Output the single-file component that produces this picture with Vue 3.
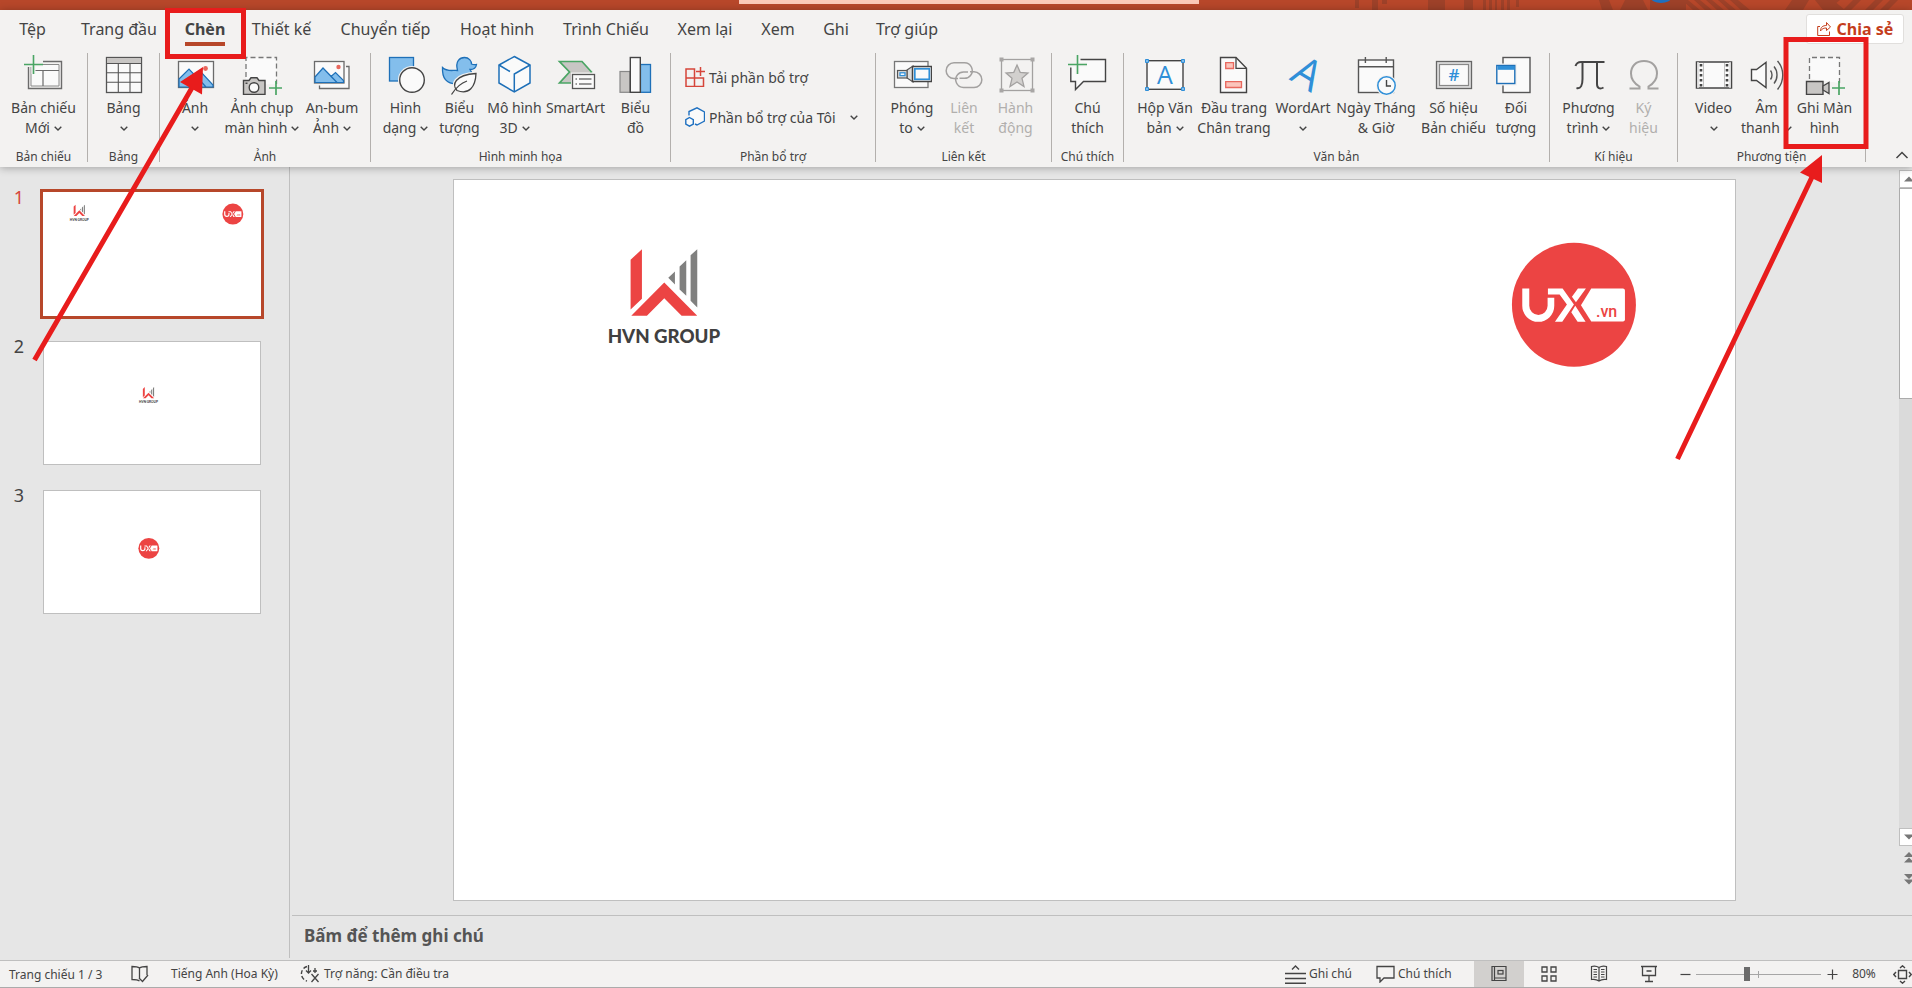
<script setup>
import { ref } from 'vue'

const tabs = [
  { label: 'Tệp', w: 65 },
  { label: 'Trang đầu', w: 108 },
  { label: 'Chèn', w: 64 },
  { label: 'Thiết kế', w: 89 },
  { label: 'Chuyển tiếp', w: 119 },
  { label: 'Hoạt hình', w: 104 },
  { label: 'Trình Chiếu', w: 114 },
  { label: 'Xem lại', w: 84 },
  { label: 'Xem', w: 62 },
  { label: 'Ghi', w: 54 },
  { label: 'Trợ giúp', w: 88 },
]
const activeTab = ref('Chèn')

const groups = [
  { name: 'Bản chiếu', w: 88, items: [{ icon: 'new', a: 'Bản chiếu', b: 'Mới', menu: true, w: 72 }] },
  { name: 'Bảng', w: 72, items: [{ icon: 'table', a: 'Bảng', b: '', menu: true, w: 52 }] },
  {
    name: 'Ảnh', w: 211, items: [
      { icon: 'picture', a: 'Ảnh', b: '', menu: true, w: 66 },
      { icon: 'shot', a: 'Ảnh chụp', b: 'màn hình', menu: true, w: 68 },
      { icon: 'album', a: 'An-bum', b: 'Ảnh', menu: true, w: 72 },
    ],
  },
  {
    name: 'Hình minh họa', w: 300, items: [
      { icon: 'shapes', a: 'Hình', b: 'dạng', menu: true, w: 54 },
      { icon: 'duck', a: 'Biểu', b: 'tượng', w: 54 },
      { icon: 'cube', a: 'Mô hình', b: '3D', menu: true, w: 56 },
      { icon: 'smart', a: 'SmartArt', b: '', w: 66 },
      { icon: 'chart', a: 'Biểu', b: 'đồ', w: 54 },
    ],
  },
  { name: 'Phần bổ trợ', w: 205, addins: true, items: [] },
  {
    name: 'Liên kết', w: 176, items: [
      { icon: 'zoom', a: 'Phóng', b: 'to', menu: true, w: 52 },
      { icon: 'link', a: 'Liên', b: 'kết', off: true, w: 52 },
      { icon: 'action', a: 'Hành', b: 'động', off: true, w: 51 },
    ],
  },
  { name: 'Chú thích', w: 72, items: [{ icon: 'comment', a: 'Chú', b: 'thích', w: 60 }] },
  {
    name: 'Văn bản', w: 426, items: [
      { icon: 'textbox', a: 'Hộp Văn', b: 'bản', menu: true, w: 66 },
      { icon: 'header', a: 'Đầu trang', b: 'Chân trang', w: 72 },
      { icon: 'wordart', a: 'WordArt', b: '', menu: true, w: 66 },
      { icon: 'date', a: 'Ngày Tháng', b: '& Giờ', w: 80 },
      { icon: 'number', a: 'Số hiệu', b: 'Bản chiếu', w: 75 },
      { icon: 'object', a: 'Đối', b: 'tượng', w: 50 },
    ],
  },
  {
    name: 'Kí hiệu', w: 128, items: [
      { icon: 'pi', a: 'Phương', b: 'trình', menu: true, w: 60 },
      { icon: 'omega', a: 'Ký', b: 'hiệu', off: true, w: 50 },
    ],
  },
  {
    name: 'Phương tiện', w: 188, items: [
      { icon: 'video', a: 'Video', b: '', menu: true, w: 58 },
      { icon: 'audio', a: 'Âm', b: 'thanh', menu: true, w: 48 },
      { icon: 'record', a: 'Ghi Màn', b: 'hình', w: 68 },
    ],
  },
]

const slides = [
  { id: 1, marks: [{ ref: '#logo-hvn', x: 0, y: 0 }, { ref: '#logo-ux', x: 0, y: 0 }] },
  { id: 2, marks: [{ ref: '#logo-hvn', x: 410, y: 198 }] },
  { id: 3, marks: [{ ref: '#logo-ux', x: -498, y: 215 }] },
]
const current = ref(0)
const zoom = ref(40)
const views = [
  { icon: 'v-normal', label: 'Bình thường' },
  { icon: 'v-sorter', label: 'Bộ sắp xếp trang chiếu' },
  { icon: 'v-read', label: 'Dạng xem đọc' },
  { icon: 'v-show', label: 'Trình chiếu' },
]
const view = ref(0)
</script>

<template>
  <svg class="defs" aria-hidden="true">
    <defs>
      <symbol id="i-new" viewBox="0 0 40 40">
        <path d="M19 6.5H37.5V33.5H4.5V12" fill="none" stroke="#6b6b6b" stroke-width="1.4" />
        <path d="M19 9.5H35V31H7V12" fill="#fafafa" stroke="#8a8a8a" stroke-width="1" />
        <path d="M11 15.5H35M19 15.5V31" fill="none" stroke="#6b6b6b" stroke-width="1.2" />
        <path d="M0 9.5H19M9.5 0V19" stroke="#f3f2f1" stroke-width="4" />
        <path d="M0 9.5H19M9.5 0V19" stroke="#4aa564" stroke-width="1.6" />
      </symbol>
      <symbol id="i-table" viewBox="0 0 40 40">
        <rect x="2.5" y="2.5" width="35" height="35" fill="#fafafa" stroke="#555" stroke-width="1.3" />
        <rect x="3" y="3" width="34" height="5.5" fill="#c8c6c4" />
        <path d="M3 8.5H37M3 17.7H37M3 27.3H37M14.3 8.5V37M26 8.5V37" stroke="#555" stroke-width="1.1" />
      </symbol>
      <symbol id="i-picture" viewBox="0 0 40 40">
        <rect x="3.5" y="6.5" width="35" height="26" fill="#fafafa" stroke="#6b6b6b" stroke-width="1.3" />
        <circle cx="30.5" cy="13.5" r="2.4" fill="#e8685e" />
        <path d="M4 24L14 14L31 32H4ZM38 31V30L27 18L22.5 22.5L31 32H38Z" fill="#83beec" stroke="#1e70b8" stroke-width="1.2" />
      </symbol>
      <symbol id="i-shot" viewBox="0 0 40 40">
        <path d="M4 30V2.5H34.5V29" fill="#fafafa" stroke="#777" stroke-width="1.3" stroke-dasharray="5 3" />
        <path d="M1.5 25.5H7L9 22.8H15L17 25.5H23V39.5H1.5Z" fill="#c8c6c4" stroke="#444" stroke-width="1.4" />
        <circle cx="12" cy="32.5" r="4.8" fill="#fafafa" stroke="#444" stroke-width="1.4" />
        <rect x="3.5" y="27.5" width="2" height="1.5" fill="#444" />
        <path d="M27 33H41M34 26V40" stroke="#4aa564" stroke-width="1.7" />
      </symbol>
      <symbol id="i-album" viewBox="0 0 40 40">
        <path d="M34 11.5H37V33.5H7.5V30.5" fill="#fafafa" stroke="#6b6b6b" stroke-width="1.3" />
        <rect x="2.5" y="6.5" width="29.5" height="21.5" fill="#fafafa" stroke="#6b6b6b" stroke-width="1.3" />
        <circle cx="26.5" cy="12" r="2.2" fill="#e8685e" />
        <path d="M3 22L11 13L25 27.5H3ZM31.5 27V25.5L23.5 17.5L19 21.5L25 27.5H31.5Z" fill="#83beec" stroke="#1e70b8" stroke-width="1.2" />
      </symbol>
      <symbol id="i-shapes" viewBox="0 0 40 40">
        <rect x="3.5" y="2.5" width="24" height="23.5" fill="#83beec" stroke="#1e70b8" stroke-width="1.3" />
        <circle cx="26" cy="25" r="14" fill="#f3f2f1" />
        <circle cx="26" cy="25" r="12.3" fill="#fafafa" stroke="#444" stroke-width="1.4" />
      </symbol>
      <symbol id="i-duck" viewBox="0 0 40 40">
        <path d="M2.5 12.5C7 17 12 15 17.5 15.5C15 6 20 2.5 24.5 2.5C29 2.5 31.5 6 31.5 9C33.5 10 35.5 9.5 36.5 9.5C36 13 33.5 14.5 30 14.5L32 18C30 27 23 29 17 29C6 29 2 23 2.5 12.5Z" fill="#83beec" stroke="#1e70b8" stroke-width="1.3" />
        <path d="M17 35.5C12 30 14 20 36 18.5C35.5 32 29 40 17 35.5ZM11.5 39.5L17 34" fill="#fafafa" stroke="#f3f2f1" stroke-width="4" />
        <path d="M17 35.5C12 30 14 20 36 18.5C35.5 32 29 40 17 35.5Z" fill="#fafafa" stroke="#444" stroke-width="1.3" />
        <path d="M11.5 39.5C15 34 21 28 27 26" fill="none" stroke="#444" stroke-width="1.3" />
      </symbol>
      <symbol id="i-cube" viewBox="0 0 40 40">
        <path d="M19.3 1.5L35 10V28L19.3 37L4 28V10Z" fill="#fafafa" stroke="#1e70b8" stroke-width="1.5" />
        <path d="M4 10L15 16.5M35 10L19.3 19V37" fill="none" stroke="#1e70b8" stroke-width="1.5" />
      </symbol>
      <symbol id="i-smart" viewBox="0 0 40 40">
        <path d="M3.5 6.5H26L35.5 17L27 28H3.5L13.5 17Z" fill="#c8c6c4" stroke="#4aa564" stroke-width="1.7" />
        <rect x="15" y="17.5" width="25" height="18" fill="#f3f2f1" />
        <rect x="16.5" y="19.5" width="22" height="14" fill="#fafafa" stroke="#555" stroke-width="1.3" />
        <path d="M19.5 24H21M23 24H35.5M19.5 29H21M23 29H35.5" stroke="#777" stroke-width="1.3" />
      </symbol>
      <symbol id="i-chart" viewBox="0 0 40 40">
        <rect x="4" y="16.5" width="10" height="20.8" fill="#c8c6c4" stroke="#888" stroke-width="1.2" />
        <rect x="24.5" y="9.5" width="10" height="27.8" fill="#83beec" stroke="#1e70b8" stroke-width="1.3" />
        <rect x="14.3" y="2.5" width="10" height="34.8" fill="#fafafa" stroke="#444" stroke-width="1.4" />
      </symbol>
      <symbol id="i-zoom" viewBox="0 0 40 40">
        <rect x="2.5" y="6.5" width="33.5" height="26" fill="#fafafa" stroke="#777" stroke-width="1.3" />
        <path d="M15 15L21 11V27L15 23Z" fill="#ddd" stroke="#555" stroke-width="1.2" />
        <rect x="5.5" y="15.5" width="9.5" height="7.5" fill="#ddd" stroke="#555" stroke-width="1.2" />
        <rect x="8" y="17.8" width="5" height="2.8" fill="#fff" stroke="#2f8fd8" stroke-width="1.3" />
        <rect x="20.5" y="11.5" width="19" height="15" fill="#fafafa" stroke="#444" stroke-width="1.5" />
        <rect x="22.8" y="13.8" width="14.5" height="10.5" fill="#fafafa" stroke="#2f8fd8" stroke-width="1.7" />
      </symbol>
      <symbol id="i-link" viewBox="0 0 40 40">
        <g fill="none" stroke="#a3a1a0" stroke-width="1.5">
          <path d="M14 23.5H10A7.8 7.8 0 0 1 10 7.8H20.5A7.8 7.8 0 0 1 26.5 20.5C25 22.5 23 23.3 20.5 23.3H15.5" />
          <path d="M26 16.8H30A7.8 7.8 0 0 1 30 32.5H19.5A7.8 7.8 0 0 1 13.5 19.8C15 17.8 17 17 19.5 17H24" />
        </g>
      </symbol>
      <symbol id="i-action" viewBox="0 0 40 40">
        <rect x="5.5" y="4.5" width="31" height="31" fill="none" stroke="#a3a1a0" stroke-width="1.3" />
        <path d="M21 10L24.2 17.3L32 18L26 23.3L28 31.5L21 27L14 31.5L16 23.3L10 18L17.8 17.3Z" fill="#d2d0ce" stroke="#a3a1a0" stroke-width="1.3" />
        <path d="M3.5 2.5h4v4h-4zM34.5 2.5h4v4h-4zM3.5 33.5h4v4h-4zM34.5 33.5h4v4h-4z" fill="#a8a6a5" />
      </symbol>
      <symbol id="i-comment" viewBox="0 0 40 40">
        <path d="M9.5 4.5H37.5V26.5H15.5L7.5 34.5V26.5H2.8V9.5H9.5Z" fill="#fafafa" />
        <path d="M12.5 4.5H37.5V26.5H15.5L7.5 34.5V26.5H2.8V12.5" fill="none" stroke="#444" stroke-width="1.4" />
        <path d="M0 9.5H19M9.5 0V19" stroke="#f3f2f1" stroke-width="4" />
        <path d="M0 9.5H19M9.5 0V19" stroke="#4aa564" stroke-width="1.6" />
      </symbol>
      <symbol id="i-textbox" viewBox="0 0 40 40">
        <rect x="2" y="5.7" width="36" height="28.6" fill="#fafafa" stroke="#444" stroke-width="1.4" />
        <path d="M.5 4.5h3v3h-3zM36.5 4.5h3v3h-3zM.5 32.5h3v3h-3zM36.5 32.5h3v3h-3z" fill="#83beec" stroke="#2f8fd8" stroke-width="1" />
        <text x="20" y="29" font-family="Open Sans, sans-serif" font-size="25" fill="#2f8fd8" text-anchor="middle">A</text>
      </symbol>
      <symbol id="i-header" viewBox="0 0 40 40">
        <path d="M6.5 2.5H22L32.5 13.3V37.5H6.5Z" fill="#fafafa" stroke="#444" stroke-width="1.4" />
        <path d="M22 2.5V13.3H32.5" fill="none" stroke="#444" stroke-width="1.3" />
        <path d="M11.7 7.7H19.5V13.5H11.7ZM11.7 26.7H27.5V32.5H11.7Z" fill="#fbc4bb" stroke="#e8685e" stroke-width="1.3" />
      </symbol>
      <symbol id="i-wordart" viewBox="0 0 40 40">
        <text transform="translate(17 31) rotate(31)" font-family="Open Sans, sans-serif" font-size="42" fill="#2f8fd8" text-anchor="middle">A</text>
      </symbol>
      <symbol id="i-date" viewBox="0 0 40 40">
        <rect x="2.5" y="5" width="35" height="32.5" fill="#fafafa" stroke="#555" stroke-width="1.4" />
        <path d="M2.5 11.7H37.5M9.4 2V8M30.2 2V8" stroke="#555" stroke-width="1.4" />
        <circle cx="30.5" cy="30.5" r="10.5" fill="#f3f2f1" />
        <circle cx="30.5" cy="30.5" r="8.7" fill="#fafafa" stroke="#2f8fd8" stroke-width="1.5" />
        <path d="M30.5 25V31H35" fill="none" stroke="#444" stroke-width="1.4" />
      </symbol>
      <symbol id="i-number" viewBox="0 0 40 40">
        <rect x="2.5" y="6.5" width="35" height="27" fill="#ddd" stroke="#666" stroke-width="1.3" />
        <rect x="5.5" y="9.5" width="29" height="21" fill="#fafafa" stroke="#888" stroke-width="1.2" />
        <text x="20" y="26" font-family="Open Sans, sans-serif" font-size="17" font-weight="600" fill="#2f8fd8" text-anchor="middle">#</text>
      </symbol>
      <symbol id="i-object" viewBox="0 0 40 40">
        <rect x="7" y="2.5" width="27" height="35" fill="#fafafa" stroke="#555" stroke-width="1.4" />
        <rect x="-1" y="8.5" width="22" height="22" fill="#f3f2f1" />
        <rect x=".8" y="10.5" width="18" height="18" fill="#fafafa" stroke="#1e70b8" stroke-width="1.4" />
        <rect x="1.5" y="11" width="17" height="3.8" fill="#2f8fd8" />
      </symbol>
      <symbol id="i-pi" viewBox="0 0 40 40">
        <path d="M6.5 11C7.5 8 9 7 12 7H35.5M13.5 7V24C13.5 30 12 34 7.5 33M28 7V29C28 33.5 31 34.5 34.5 32.5" fill="none" stroke="#444" stroke-width="2" />
      </symbol>
      <symbol id="i-omega" viewBox="0 0 40 40">
        <path d="M5.500 33.5H15.5V31.5C9.5 28 7 24 7 18.5C7 11 12 6 20 6C28 6 33 11 33 18.5C33 24 30.5 28 24.5 31.5V33.5H34.5" fill="none" stroke="#a3a1a0" stroke-width="2" />
      </symbol>
      <symbol id="i-video" viewBox="0 0 40 40">
        <rect x="2.5" y="7" width="35" height="26" fill="#fafafa" stroke="#444" stroke-width="1.5" />
        <path d="M4 7V33M36 7V33" stroke="#ddd" stroke-width="1.5" />
        <path d="M7 9V32M33 9V32" stroke="#444" stroke-width="2.6" stroke-dasharray="2.5 2.5" />
        <path d="M9.5 8V32M30.5 8V32" stroke="#999" stroke-width=".6" />
      </symbol>
      <symbol id="i-audio" viewBox="0 0 40 40">
        <path d="M4.5 14.5H9.5L19 7.5V32.5L9.5 25.5H4.5Z" fill="#fafafa" stroke="#444" stroke-width="1.4" />
        <path d="M23.5 15.5C25.5 18 25.5 22 23.5 24.5M27 11.5C31 16 31 24 27 28.5M30.5 6C37.5 14 37.5 26 30.5 34.5" fill="none" stroke="#555" stroke-width="1.4" />
      </symbol>
      <symbol id="i-record" viewBox="0 0 40 40">
        <path d="M4.5 24V2.5H34.5V28" fill="#fafafa" stroke="#777" stroke-width="1.3" stroke-dasharray="5 3" />
        <path d="M1.5 26.5H18V39.5H1.5Z" fill="#c8c6c4" stroke="#444" stroke-width="1.4" />
        <path d="M18 31L24 27.5V38.5L18 35Z" fill="#c8c6c4" stroke="#444" stroke-width="1.3" />
        <path d="M27 33H41M34 26V40" stroke="#4aa564" stroke-width="1.7" />
      </symbol>

      <symbol id="v-normal" viewBox="0 0 20 20">
        <path d="M3 2.5H17V16.5H3ZM5.5 2.5V16.5M5.5 14H17" fill="none" stroke="#444" stroke-width="1.2" />
        <rect x="9" y="6.5" width="5" height="3.5" fill="none" stroke="#444" stroke-width="1.2" />
      </symbol>
      <symbol id="v-sorter" viewBox="0 0 20 20">
        <path d="M3 3H8V8H3ZM12 3H17V8H12ZM3 12H8V17H3ZM12 12H17V17H12Z" fill="none" stroke="#444" stroke-width="1.3" />
      </symbol>
      <symbol id="v-read" viewBox="0 0 20 20">
        <path d="M10 3.5C7.5 1.8 5 1.8 2.5 2.5V15.5C5 15 7.5 15.2 10 17C12.5 15.2 15 15 17.5 15.5V2.5C15 1.8 12.5 1.8 10 3.5ZM10 3.5V17" fill="none" stroke="#444" stroke-width="1.2" />
        <path d="M4.5 5.5H8M4.5 8H8M4.5 10.5H8M4.5 13H8M12 5.5H15.5M12 8H15.5M12 10.5H15.5M12 13H15.5" stroke="#444" stroke-width="1.1" />
      </symbol>
      <symbol id="v-show" viewBox="0 0 20 20">
        <path d="M2 2.5H18M3.5 2.5V11.5H16.5V2.5M10 11.5V17M6 17.5H14M7.5 7H12.5" fill="none" stroke="#444" stroke-width="1.3" />
      </symbol>

      <g id="logo-hvn">
        <g transform="translate(105.5 40.5) scale(.3333)">
          <path d="M211 118L245 86V235L211 267ZM213 286L312 186L411 286H364L312 233L260 286Z" fill="#ec4443" />
          <path d="M324 172L344 153V192ZM358 138L378 119V226L358 207ZM391 104L411 86V261L391 241Z" fill="#80807f" />
          <text x="311" y="369" font-family="Lato, sans-serif" font-size="56" font-weight="900" fill="#404040" text-anchor="middle">HVN GROUP</text>
        </g>
      </g>
      <g id="logo-ux">
        <g transform="translate(1025.5 40.5) scale(.3333)">
          <circle cx="281" cy="253" r="186" fill="#ec4443" />
          <g fill="#fff">
            <path d="M126 204H147V256A27.500 27.500 0 0 0 202 256V232H222V256A48 48 0 0 1 126 256Z" />
            <path d="M203 204H247L281 252L246 304H224L260 252L238 222H203Z" />
            <path d="M293 204H317L287 245L275 229ZM285 256L316 304H292L273 275Z" />
            <path d="M333 204H428Q434 204 434 210V297Q434 303 428 303H333L302 254Z" />
          </g>
          <text x="379" y="290" font-family="Roboto, sans-serif" font-size="48" font-weight="500" fill="#ec4443" text-anchor="middle">.vn</text>
        </g>
      </g>
    </defs>
  </svg>

  <div class="app">
    <div class="titlebar">
      <div class="search"></div>
      <svg class="pattern" width="572" height="10" viewBox="0 0 572 10" aria-hidden="true">
        <path d="M15 0h4v8h-4zM32 0h6v10h-6zM42 0h5v4h-5zM88 0h17v10H88zM124 0h9v10h-9zM143 0h3v10h-3zM149 0h3v10h-3zM155 0h2v10h-2zM161 0h3v10h-3zM167 0h3v10h-3zM176 0h3v7h-3zM259 0h10l4 10h-11zM285 0h18l5 10h-28zM310 0h36v10h-36zM342 0h6l12 10h-7zM354 0h6l12 10h-7zM366 0h6l12 10h-7zM378 0h6l12 10h-7zM390 0h8l12 10h-9zM452 0h17l-6 10h-18zM475 0h18l12 10h-22zM492 0h8l-10 8-6-2zM513 0h8l-10 10h-8zM535 0h8l-10 10h-8zM550 0h8l-10 10h-8z" fill="#9d4129" />
        <ellipse cx="321" cy="-2" rx="10" ry="5" fill="#1e70c0" />
      </svg>
    </div>

    <header class="ribbon">
      <div class="tabrow">
        <nav class="tabs">
          <button
            v-for="t in tabs" :key="t.label" class="tab" :class="{ on: t.label === activeTab }"
            :style="{ width: t.w + 'px' }" @click="activeTab = t.label"
          ><span>{{ t.label }}</span></button>
        </nav>
        <button class="share">
          <svg width="14" height="16" viewBox="0 0 14 16" aria-hidden="true">
            <path d="M3 5.5H.7V14.5H12.5V10.5M3.5 10C3.5 6 6 4.5 9.500 4.500V1.5L13.5 6L9.5 9.5V7C7 7 5 7.5 3.5 10Z" fill="none" stroke="#c43e1c" stroke-width="1" />
          </svg>
          Chia sẻ
        </button>
      </div>

      <div class="groups">
        <section v-for="g in groups" :key="g.name" class="group" :style="{ width: g.w + 'px' }">
          <div v-if="g.addins" class="addins">
            <button class="addin">
              <svg width="20" height="20" viewBox="0 0 20 20" aria-hidden="true">
                <path d="M1 2H9.5V19.5H1ZM1 11H18.5V19.5H9.5V11M15.5 0V9M11 4.500H20" fill="none" stroke="#d6453a" stroke-width="1.5" />
              </svg>
              <span>Tải phần bổ trợ</span>
            </button>
            <button class="addin">
              <svg width="20" height="20" viewBox="0 0 20 20" aria-hidden="true">
                <path d="M4 8.5V4.5L12 .8L19.5 5V14L12 18L10 17" fill="#fafafa" stroke="#1e70c0" stroke-width="1.4" />
                <path d="M4.5 10.5L8.3 12.7V17L4.5 19.2L.8 17V12.7Z" fill="#fafafa" stroke="#1e70c0" stroke-width="1.4" />
              </svg>
              <span>Phần bổ trợ của Tôi</span>
              <svg class="caret wide" width="8" height="5" viewBox="0 0 8 5" aria-hidden="true"><path d="M.7 .7L4 4L7.3 .7" /></svg>
            </button>
          </div>
          <div v-else class="items">
            <button
              v-for="b in g.items" :key="b.icon" class="cmd" :disabled="b.off"
              :style="{ width: b.w + 'px' }"
            >
              <svg class="ico" width="40" height="40" aria-hidden="true"><use :href="'#i-' + b.icon" /></svg>
              <span class="line">{{ b.a }}</span>
              <span class="line">
                {{ b.b }}
                <svg v-if="b.menu" class="caret" width="8" height="5" viewBox="0 0 8 5" aria-hidden="true"><path d="M.7 .7L4 4L7.3 .7" /></svg>
              </span>
            </button>
          </div>
          <div class="gname">{{ g.name }}</div>
        </section>
        <button class="collapse" aria-label="Thu gọn dải băng">
          <svg width="14" height="8" viewBox="0 0 14 8" aria-hidden="true"><path d="M1.5 7L7 1.5L12.5 7" fill="none" stroke="#444" stroke-width="1.5" /></svg>
        </button>
      </div>
    </header>

    <main class="work">
      <aside class="thumbs">
        <button
          v-for="(s, i) in slides" :key="s.id" class="thumb" :class="{ on: i === current }"
          @click="current = i"
        >
          <span class="num">{{ s.id }}</span>
          <svg class="mini" viewBox="0 0 1280 720" aria-hidden="true">
            <use v-for="m in s.marks" :key="m.ref" :href="m.ref" :x="m.x" :y="m.y" />
          </svg>
        </button>
      </aside>
      <div class="editor">
        <div class="stage">
          <div class="canvas">
            <svg class="slide" viewBox="0 0 1280 720" role="img" aria-label="Trang chiếu">
              <use v-for="m in slides[current].marks" :key="m.ref" :href="m.ref" :x="m.x" :y="m.y" />
            </svg>
          </div>
          <div class="scroll">
            <button class="sbtn" aria-label="Lên"><svg width="10" height="6" viewBox="0 0 10 6"><path d="M0 5.5L5 .5L10 5.5Z" /></svg></button>
            <div class="track"><div class="grip"></div></div>
            <button class="sbtn" aria-label="Xuống"><svg width="10" height="6" viewBox="0 0 10 6"><path d="M0 .5L5 5.5L10 .5Z" /></svg></button>
            <button class="jump" aria-label="Trang trước"><svg width="10" height="11" viewBox="0 0 10 11"><path d="M0 5L5 0L10 5ZM0 10.5L5 5.5L10 10.5Z" /></svg></button>
            <button class="jump" aria-label="Trang sau"><svg width="10" height="11" viewBox="0 0 10 11"><path d="M0 0L5 5L10 0ZM0 5.5L5 10.5L10 5.5Z" /></svg></button>
          </div>
        </div>
        <div class="notes">Bấm để thêm ghi chú</div>
      </div>
    </main>

    <footer class="status">
      <span class="page">Trang chiếu 1 / 3</span>
      <button class="flat spell" aria-label="Soát lỗi">
        <svg width="18" height="18" viewBox="0 0 18 18"><path d="M8.5 3C6.5 1.5 3.5 1.5 1 1.5V14.5C4 14.5 6.5 14.5 8.5 16M8.5 3C10.5 1.5 13 1.5 16 1.5V10M8.5 3V13M8 13L11.5 16.5L17 10" fill="none" stroke="#444" stroke-width="1.3" /></svg>
      </button>
      <button class="flat lang">Tiếng Anh (Hoa Kỳ)</button>
      <button class="flat access">
        <svg width="20" height="18" viewBox="0 0 20 18" aria-hidden="true">
          <path d="M7 1.5A7.5 7.5 0 0 0 7 16" fill="none" stroke="#444" stroke-width="1.4" stroke-dasharray="4 2" />
          <path d="M8.500 0V8M6 5.5L8.5 8L11 5.5M11.5 9L18.5 17M18.5 9L11.5 17M15 3V8M13 6H17" fill="none" stroke="#444" stroke-width="1.3" />
        </svg>
        Trợ năng: Cần điều tra
      </button>
      <div class="right">
        <button class="flat note">
          <svg width="21" height="20" viewBox="0 0 21 20" aria-hidden="true"><path d="M7 5.5L10.5 2L14 5.5M0 9.5H21M0 14.5H21M0 19.3H21" fill="none" stroke="#444" stroke-width="1.4" /></svg>
          Ghi chú
        </button>
        <button class="flat cmt">
          <svg width="19" height="18" viewBox="0 0 19 18" aria-hidden="true"><path d="M1 1.5H18V13H8L4 17V13H1Z" fill="none" stroke="#444" stroke-width="1.3" /></svg>
          Chú thích
        </button>
        <button
          v-for="(v, i) in views" :key="v.icon" class="vbtn" :class="{ on: i === view }"
          :aria-label="v.label" @click="view = i"
        ><svg width="20" height="20"><use :href="'#' + v.icon" /></svg></button>
        <button class="step" aria-label="Thu nhỏ"><svg width="11" height="11" viewBox="0 0 11 11"><path d="M.5 5.5H10.5" stroke="#444" stroke-width="1.2" /></svg></button>
        <input v-model="zoom" class="slider" type="range" min="0" max="100" aria-label="Thu phóng">
        <button class="step" aria-label="Phóng to"><svg width="11" height="11" viewBox="0 0 11 11"><path d="M.5 5.5H10.5M5.5 .5V10.5" stroke="#444" stroke-width="1.2" /></svg></button>
        <button class="flat pct">80%</button>
        <button class="flat fit" aria-label="Vừa cửa sổ">
          <svg width="19" height="19" viewBox="0 0 19 19"><path d="M5.5 5.5H13.5V13.5H5.5ZM7 3L9.5 .8L12 3M7 16L9.5 18.2L12 16M3 7L.8 9.5L3 12M16 7L18.2 9.5L16 12" fill="none" stroke="#444" stroke-width="1.4" /></svg>
        </button>
      </div>
    </footer>

    <svg class="marks" aria-hidden="true">
      <g fill="none" stroke="#e81c1c">
        <rect x="167.5" y="10.5" width="76" height="46" stroke-width="5" />
        <rect x="1786" y="39.5" width="80" height="107" stroke-width="5" />
        <path d="M34.5 360L193 86M1677.5 459L1813 175" stroke-width="5" />
      </g>
      <path d="M203 67L180 82L202 94.5ZM1822 155L1800 172.5L1822 183Z" fill="#e81c1c" />
    </svg>
  </div>
</template>

<style>
body { margin: 0; overflow: hidden; }
</style>

<style scoped>
.defs { position: absolute; width: 0; height: 0; }
.app {
  display: flex; flex-direction: column; height: 100vh; position: relative; overflow: hidden;
  font-family: "Noto Sans", "Open Sans", sans-serif; font-size: 14px; color: #444; background: #e6e6e6;
}
button { font: inherit; color: inherit; background: none; border: 0; padding: 0; margin: 0; white-space: nowrap; }
.titlebar { height: 10px; flex: none; background: #b7472a; display: grid; grid-template-columns: 1fr 460px 1fr; }
.search { grid-column: 2; height: 4px; background: #fbc9b8; margin-left: 13px; width: 460px; }
.pattern { grid-column: 3; justify-self: end; }
.ribbon { flex: none; background: #f3f2f1; position: relative; box-shadow: 0 1px 8px rgba(0, 0, 0, .3); z-index: 1; }
.tabrow { display: flex; justify-content: space-between; height: 43px; }
.tabs { display: flex; height: 38px; }
.tab { font-size: 16px; line-height: 38px; height: 36px; display: flex; justify-content: center; }
.tab.on { font-weight: 700; }
.tab.on span { border-bottom: 4px solid #b7472a; height: 32px; }
.share {
  margin: 4px 8px 0 0; width: 98px; height: 30px; background: #fff; border: 1px solid #e1dfdd; border-radius: 3px;
  color: #c43e1c; font-weight: 700; font-size: 16px; display: flex; align-items: center; justify-content: center; gap: 6px;
}
.groups { display: flex; height: 114px; }
.group {
  box-sizing: border-box; height: 109px; border-right: 1px solid #b3b0ad; flex: none;
  display: flex; flex-direction: column; justify-content: space-between;
}
.items { display: flex; justify-content: center; }
.cmd { display: flex; flex-direction: column; align-items: center; padding-top: 2px; line-height: 20px; }
.cmd:disabled { color: #b1afad; }
.ico { overflow: visible; margin-bottom: 3px; flex: none; }
.line { height: 20px; display: flex; align-items: center; gap: 4px; }
.caret { flex: none; fill: none; stroke: #444; stroke-width: 1.4px; }
.caret.wide { margin-left: 10px; }
.gname { text-align: center; font-size: 12px; line-height: 10px; }
.addins { display: flex; flex-direction: column; padding: 4px 0 0 14px; }
.addin { display: flex; align-items: center; gap: 4px; height: 40px; }
.collapse { margin-left: auto; align-self: flex-end; padding: 0 3px 4px 0; }

.work { flex: 1; min-height: 0; display: flex; }
.thumbs { width: 290px; flex: none; border-right: 1px solid #bfbfbf; padding-top: 20px; box-sizing: border-box; margin-bottom: 2px; }
.thumb { display: flex; align-items: flex-start; height: 149px; width: 100%; }
.num { width: 38px; font-size: 18px; line-height: 20px; }
.mini { width: 216px; background: #fff; border: 1px solid #bfbfbf; margin: 5px 0 0 5px; }
.thumb.on .num { color: #d6453a; }
.thumb.on .mini { outline: 3px solid #b7472a; border-color: #fff; }
.editor { flex: 1; min-width: 0; display: flex; flex-direction: column; padding-left: 2px; }
.stage { flex: 1; min-height: 0; display: flex; }
.canvas { flex: 1; min-width: 0; display: flex; justify-content: center; padding: 12px 2px 14px 0; }
.slide { display: block; height: 100%; aspect-ratio: 16 / 9; box-sizing: border-box; background: #fff; border: 1px solid #bfbfbf; }
.scroll { width: 13px; flex: none; display: flex; flex-direction: column; padding-top: 3px; padding-bottom: 25px; overflow: hidden; }
.scroll svg { flex: none; fill: #777; }
.sbtn { width: 20px; height: 18px; border: 1px solid #bfbfbf; background: #fff; display: flex; align-items: center; justify-content: center; flex: none; box-sizing: border-box; }
.track { flex: 1; background: #dadada; width: 20px; }
.grip { box-sizing: border-box; height: 33%; background: #fff; border: 1px solid #ababab; }
.jump { width: 20px; height: 22px; display: flex; align-items: center; justify-content: center; flex: none; }
.notes { height: 44px; border-top: 1px solid #bfbfbf; padding-left: 12px; font-size: 17px; font-weight: 700; line-height: 40px; color: #555; }

.status {
  height: 26px; flex: none; background: #f3f2f1; border-top: 1px solid #bfbfbf; border-bottom: 1px solid #ababab;
  display: flex; align-items: stretch; font-size: 12px; line-height: 28px;
}
.page { padding-left: 9px; width: 122px; box-sizing: border-box; flex: none; margin-right: 9px; }
.flat { display: flex; align-items: center; gap: 4px; }
.spell { width: 40px; }
.lang { width: 129px; }
.right { margin-left: auto; display: flex; }
.note { width: 91px; gap: 3px; }
.cmt { width: 98px; gap: 3px; }
.vbtn { width: 50px; display: flex; align-items: center; justify-content: center; }
.vbtn.on { background: #d2d0ce; }
.step { width: 22px; display: flex; align-items: center; justify-content: center; }
.slider {
  appearance: none; width: 125px; margin: 0; height: 26px;
  background: linear-gradient(#a6a6a6, #a6a6a6) center / 1px 7px no-repeat, linear-gradient(#a6a6a6, #a6a6a6) center / 100% 1px no-repeat;
}
.slider::-webkit-slider-thumb { appearance: none; width: 6px; height: 14px; background: #6b6b6b; }
.pct { width: 42px; justify-content: center; }
.fit { width: 27px; justify-content: flex-end; }

.marks { position: absolute; inset: 0; width: 100%; height: 100%; pointer-events: none; z-index: 2; }
</style>
